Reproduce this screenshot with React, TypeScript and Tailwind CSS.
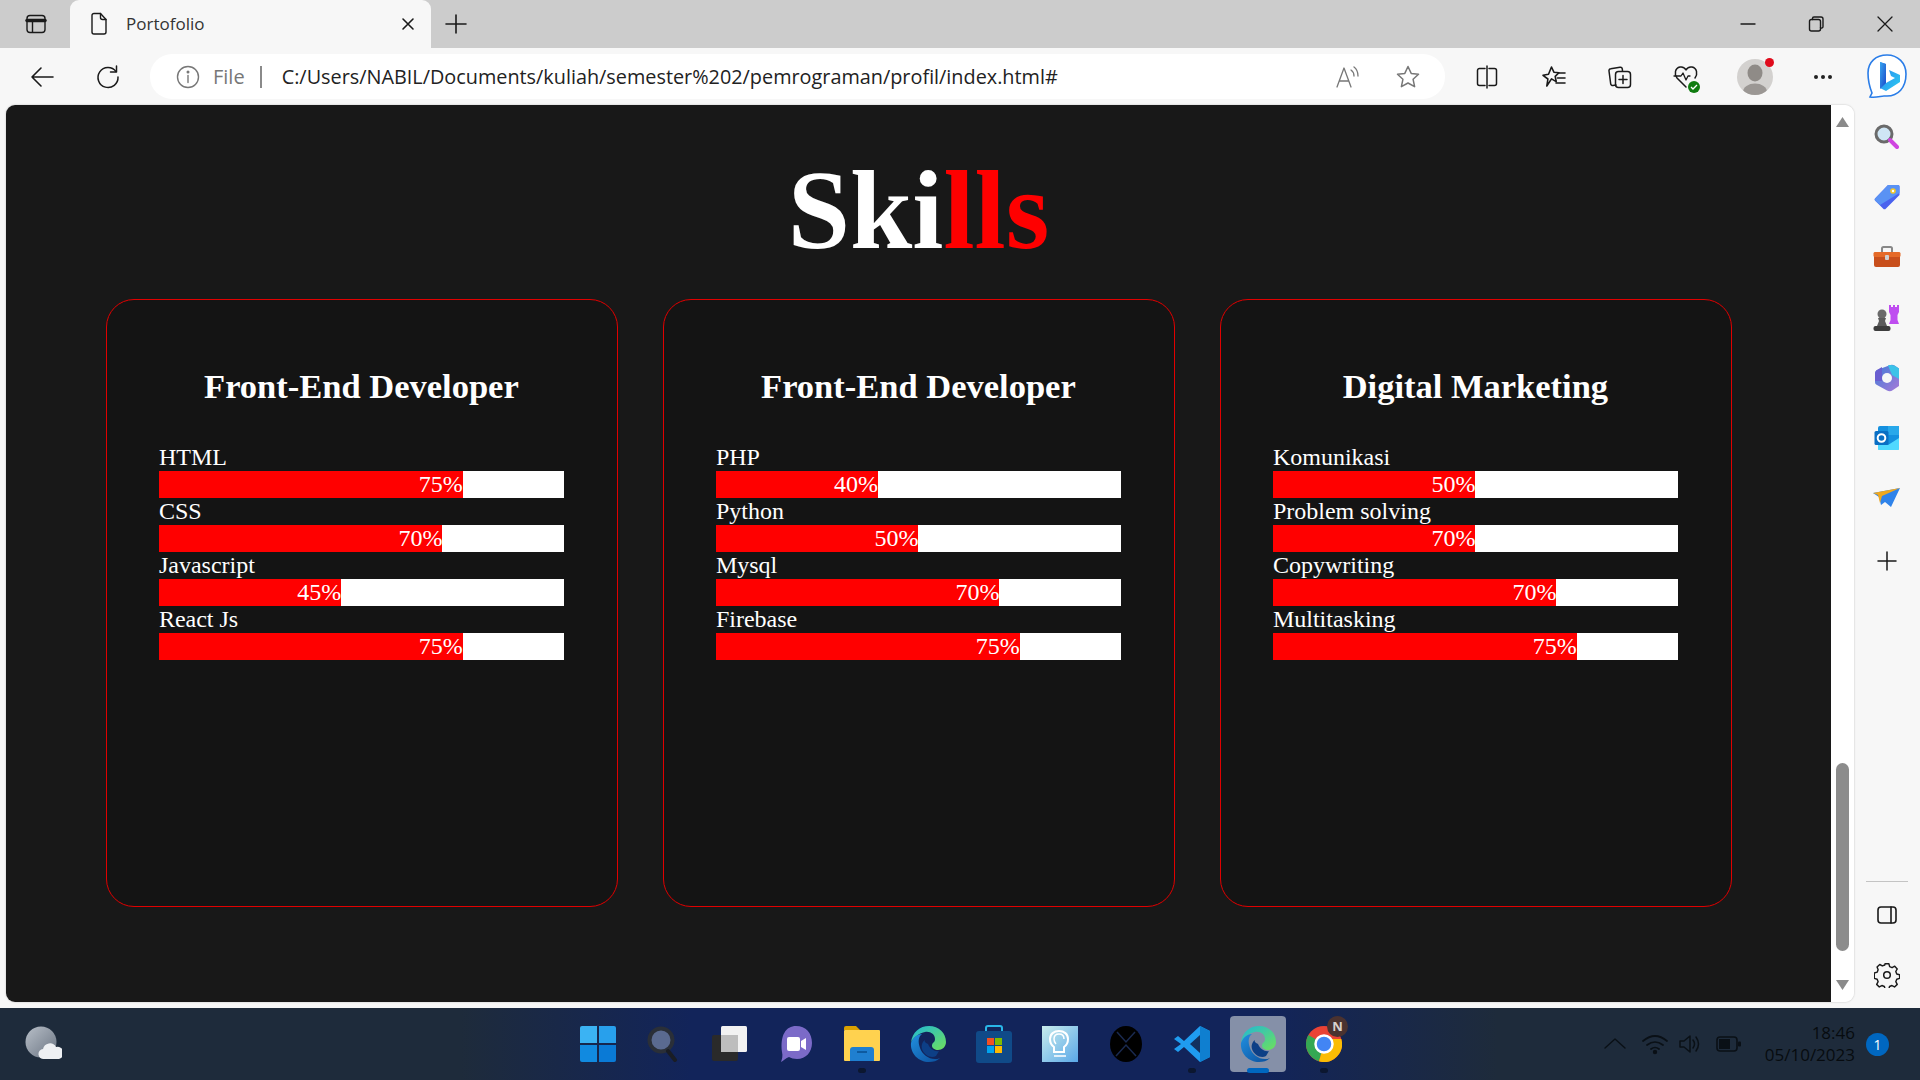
import React from "react";

type S = { children?: React.ReactNode; size?: number; w?: number; h?: number; vb?: string };
const I = ({ children, w = 24, h, vb }: S) => (
  <svg width={w} height={h ?? w} viewBox={vb ?? `0 0 ${w} ${h ?? w}`} fill="none" stroke="#1a1a1a" strokeWidth="1.4" strokeLinecap="round" strokeLinejoin="round" className="block shrink-0">{children}</svg>
);

const Slot = ({ w, children, className = "" }: { w: string; children?: React.ReactNode; className?: string }) => (
  <div className={`flex items-center justify-center shrink-0 ${w} ${className}`}>{children}</div>
);

const TabBar = () => (
  <div className="h-[48px] bg-[#cccccc] flex items-end shrink-0 relative">
    <Slot w="w-[70px]" className="h-[48px] pl-[2px]">
      <I w={22}><rect x="2" y="2.5" width="18" height="17" rx="3" /><path d="M2 7.500h18" strokeWidth="3.5" /><path d="M7.500 8v11" /></I>
    </Slot>
    <div className="w-[361px] h-[48px] bg-[#f7f7f7] rounded-t-[9px] flex items-center shrink-0">
      <div className="ml-[19px]">
        <I w={20} h={24}><path d="M3 3.500a2 2 0 0 1 2-2h6.500L17 7.500V20a2 2 0 0 1-2 2H5a2 2 0 0 1-2-2z" /><path d="M11.500 1.500v4a2 2 0 0 0 2 2H17" /></I>
      </div>
      <span className="ml-[17px] -mt-[1px] text-[17px] text-[#333] font-['Open_Sans',sans-serif] leading-none">Portofolio</span>
      <div className="ml-auto mr-[15px]"><I w={16}><path d="M3 3l10 10M13 3L3 13" strokeWidth="1.6" /></I></div>
    </div>
    <Slot w="w-[50px]" className="h-[48px]"><I w={24}><path d="M12 3v18M2 12h20" strokeWidth="1.6" /></I></Slot>
    <div className="ml-auto flex h-[48px] items-center">
      <Slot w="w-[68px]"><I w={18}><path d="M2 9h14" /></I></Slot>
      <Slot w="w-[68px]"><I w={18}><rect x="2.500" y="4.500" width="11" height="11.500" rx="2" /><path d="M5.500 4.500V3.500a1.500 1.500 0 0 1 1.500-1.500h7a2 2 0 0 1 2 2v7.500a1.500 1.500 0 0 1-2.500 1.200" /></I></Slot>
      <Slot w="w-[70px]"><I w={18}><path d="M2 2l14 14M16 2L2 16" strokeWidth="1.3" /></I></Slot>
    </div>
  </div>
);

const Bing = () => (
  <svg width="46" height="46" viewBox="0 0 44 46" className="block">
    <defs>
      <linearGradient id="bg1" x1="0" y1="0" x2="1" y2="1"><stop offset="0" stopColor="#37a5f0" /><stop offset="1" stopColor="#1a47c8" /></linearGradient>
      <linearGradient id="bg2" x1="0" y1="0" x2="1" y2="1"><stop offset="0" stopColor="#2a7ff0" /><stop offset="1" stopColor="#2ccdf0" /></linearGradient>
    </defs>
    <path d="M22 2C11 2 3 9 3 20c0 8 2 15 4 20l-2 4c6 1 11-1 14-1h3c11 0 19-8 19-22C41 10 33 2 22 2z" fill="#fff" stroke="#2a7de8" strokeWidth="1.6" />
    <path d="M15 9l6 2v19l9-5-4-2-2-6 11 5v7l-14 9-6-3z" fill="url(#bg2)" />
    <path d="M15 9l6 2v19l-6 6z" fill="url(#bg1)" />
  </svg>
);

const Toolbar = () => (
  <div className="h-[57px] bg-[#f7f7f7] flex items-start shrink-0 pt-[6px]">
    <Slot w="w-[50px]" className="ml-[17px] h-[45px]"><I w={26}><path d="M24 13H3M12 4l-9 9 9 9" strokeWidth="1.6" /></I></Slot>
    <Slot w="w-[50px]" className="ml-[16px] h-[45px]"><I w={26}><path d="M21 7.500A10 10 0 1 0 23 13" strokeWidth="1.5" /><path d="M21.500 2v6h-6" strokeWidth="1.5" /></I></Slot>
    <div className="ml-[17px] w-[1295px] h-[45px] bg-white rounded-[22px] flex items-center shrink-0">
      <div className="ml-[26px]">
        <I w={24}><circle cx="12" cy="12" r="10.500" stroke="#777" /><path d="M12 10.500v7" stroke="#777" /><circle cx="12" cy="7" r="0.8" fill="#777" stroke="#777" /></I>
      </div>
      <span className="ml-[13px] text-[20px] text-[#777] font-['Open_Sans',sans-serif] leading-none">File</span>
      <div className="ml-[15px] w-[2px] h-[22px] bg-[#8a8a8a]" />
      <span className="ml-[20px] text-[19.83px] text-[#222] font-['Open_Sans',sans-serif] leading-none whitespace-nowrap">C:/Users/NABIL/Documents/kuliah/semester%202/pemrograman/profil/index.html#</span>
      <div className="ml-auto mr-[24px] flex items-center gap-[34px]">
        <I w={26}><path d="M2 23L9 4l7 19M4.500 17h9" stroke="#777" strokeWidth="1.3" /><path d="M16 6q3 2 3 6M19 3q4 3 4 9" stroke="#777" strokeWidth="1.3" /></I>
        <I w={26}><path d="M13 2.500l3.200 6.900 7.300.9-5.400 5 1.500 7.400-6.600-3.700-6.600 3.700 1.500-7.400-5.400-5 7.300-.9z" stroke="#777" strokeWidth="1.5" /></I>
      </div>
    </div>
    <Slot w="w-[66px]" className="ml-[9px] h-[45px]"><I w={24}><path d="M10 3.500H4.500a2 2 0 0 0-2 2v13a2 2 0 0 0 2 2H10M14 3.500h5.500a2 2 0 0 1 2 2v13a2 2 0 0 1-2 2H14M12 1v22" strokeWidth="1.5" /></I></Slot>
    <Slot w="w-[66px]" className="ml-[1px] h-[45px]"><I w={26}><path d="M10.500 3l2.400 5.200 5 .6-3.700 3.600 1 5.200-4.700-2.700L5.800 22l1.100-7L2 11.300l5.500-1z" strokeWidth="1.6" /><path d="M17 9h7M16.500 14h7.500M15 19h9" strokeWidth="1.6" /></I></Slot>
    <Slot w="w-[66px]" className="h-[45px]"><I w={26}><path d="M9 21l-3 .5a2 2 0 0 1-2.300-1.700L2 7a2 2 0 0 1 1.700-2.300L13 3.200a2 2 0 0 1 2.300 1.600L15.500 7" strokeWidth="1.5" /><rect x="8.500" y="7.500" width="15" height="16" rx="3" strokeWidth="1.5" /><path d="M16 11.500v8M12 15.500h8" strokeWidth="1.5" /></I></Slot>
    <Slot w="w-[66px]" className="h-[45px]">
      <div className="relative w-[26px] h-[26px]">
        <I w={26}><path d="M13 23L4 14C1 10 2 4 7 3c3-.5 5 1 6 3 1-2 3-3.500 6-3 5 1 6 7 3 11" strokeWidth="1.5" /><path d="M1 12h7l2-3 3 7 2-4h2" strokeWidth="1.3" /></I>
        <div className="absolute right-[-1px] bottom-[-3px] w-[12px] h-[12px] rounded-full bg-[#107c10] flex items-center justify-center">
          <svg width="8" height="8" viewBox="0 0 8 8" fill="none" stroke="#fff" strokeWidth="1.3"><path d="M1 4l2 2 4-4" /></svg>
        </div>
      </div>
    </Slot>
    <Slot w="w-[68px]" className="ml-[2px] h-[45px]">
      <div className="relative w-[36px] h-[36px] rounded-full bg-[#d3d1cf]">
        <div className="w-[36px] h-[36px] rounded-full overflow-hidden">
          <svg width="36" height="36" viewBox="0 0 36 36"><ellipse cx="18" cy="14" rx="7.500" ry="8.500" fill="#8f8b87" /><ellipse cx="18" cy="33" rx="12" ry="8.500" fill="#9b9794" /></svg>
        </div>
        <div className="absolute right-[-1px] top-[-1px] w-[9px] h-[9px] rounded-full bg-[#e00b1c]" />
      </div>
    </Slot>
    <Slot w="w-[68px]" className="h-[45px]"><div className="flex gap-[3px]"><div className="w-[4px] h-[4px] rounded-full bg-[#222]" /><div className="w-[4px] h-[4px] rounded-full bg-[#222]" /><div className="w-[4px] h-[4px] rounded-full bg-[#222]" /></div></Slot>
    <Slot w="w-[60px]" className="h-[48px] -mt-[2px]"><Bing /></Slot>
  </div>
);

const bars = [
  { title: "Front-End Developer", items: [["HTML", 75, 75], ["CSS", 70, 70], ["Javascript", 45, 45], ["React Js", 75, 75]] },
  { title: "Front-End Developer", items: [["PHP", 40, 40], ["Python", 50, 50], ["Mysql", 70, 70], ["Firebase", 75, 75]] },
  { title: "Digital Marketing", items: [["Komunikasi", 50, 50], ["Problem solving", 50, 70], ["Copywriting", 70, 70], ["Multitasking", 75, 75]] },
] as { title: string; items: [string, number, number][] }[];

const Card = ({ title, items }: { title: string; items: [string, number, number][] }) => (
  <div className="w-[512px] h-[608px] border border-[#e00000] rounded-[28px] bg-[#141414] pl-[52.4px] pr-[52.6px] pt-[66px] shrink-0">
    <h2 className="text-[34.5px] leading-[40px] font-bold text-center text-white mb-[38px]">{title}</h2>
    {items.map(([n, w, p]) => (
      <div key={n}>
        <div className="text-[24px] leading-[27px] text-white">{n}</div>
        <div className="h-[27px] bg-white">
          <div className="h-[27px] bg-[#ff0000] text-right text-white text-[24px] leading-[27px]" style={{ width: `${w}%` }}>{p}%</div>
        </div>
      </div>
    ))}
  </div>
);

const Page = () => (
  <div className="ml-[6px] w-[1848px] h-[897px] rounded-[9px] overflow-hidden flex shrink-0 shadow-[0_0_2px_rgba(0,0,0,0.25)]">
    <div className="w-[1825px] bg-[#181818] font-['Liberation_Serif',serif]">
      <h1 className="text-center font-bold text-[112px] leading-[128px] text-white mt-[41px]">Ski<span className="text-[#ff0000]">lls</span></h1>
      <div className="flex justify-center gap-[45px] mt-[25px]">
        {bars.map((b, i) => <Card key={i} title={b.title} items={b.items} />)}
      </div>
    </div>
    <div className="w-[23px] bg-white flex flex-col items-center pt-[12px]">
      <svg width="13" height="10" viewBox="0 0 13 10" className="mr-[1px]"><path d="M6.500 0L13 10H0z" fill="#8a8a8a" /></svg>
      <div className="mt-[636px] w-[13px] h-[188px] rounded-full bg-[#8c8c8c] mr-[1px]" />
      <svg width="13" height="10" viewBox="0 0 13 10" className="mt-[29px] mr-[1px]"><path d="M6.500 10L13 0H0z" fill="#8a8a8a" /></svg>
    </div>
  </div>
);

const SideIcon = ({ children }: { children: React.ReactNode }) => (
  <div className="h-[60.2px] flex items-center justify-center">{children}</div>
);

const Sidebar = () => (
  <div className="w-[66px] h-[897px] flex flex-col items-center pt-[2px] shrink-0">
    <SideIcon>
      <svg width="26" height="26" viewBox="0 0 26 26" className="mr-[3px]"><circle cx="11" cy="10" r="8" fill="#cfe6f5" stroke="#6a6a6a" strokeWidth="3" /><path d="M17 16l7 7" stroke="#cf45e0" strokeWidth="4" strokeLinecap="round" /></svg>
    </SideIcon>
    <SideIcon>
      <svg width="26" height="26" viewBox="0 0 26 26"><path d="M14 1h10a1.500 1.500 0 0 1 1.500 1.500V11L12 24.500a2 2 0 0 1-3 0L1.500 17a2 2 0 0 1 0-3z" fill="#4a62ee" /><path d="M14 1h10a1.500 1.500 0 0 1 1.500 1.500V9L6 21 1.500 17a2 2 0 0 1 0-3z" fill="#5a92f4" /><circle cx="19" cy="7" r="2.800" fill="#f3c62a" /><circle cx="19" cy="7" r="1.200" fill="#fff" /></svg>
    </SideIcon>
    <SideIcon>
      <svg width="28" height="24" viewBox="0 0 28 24"><path d="M9 7V3.500A1.500 1.500 0 0 1 10.500 2h7A1.500 1.500 0 0 1 19 3.500V7" stroke="#888" strokeWidth="2" fill="none" /><rect x="1" y="7" width="26" height="15" rx="2" fill="#c84f1c" /><rect x="0.500" y="7" width="27" height="5" rx="1.500" fill="#e56a28" /><rect x="12" y="10" width="4" height="5" rx="1" fill="#cfcfcf" /></svg>
    </SideIcon>
    <SideIcon>
      <svg width="28" height="28" viewBox="0 0 28 28"><path d="M16 1h2v2h2V1h2v2h2V1h2v7l-1.500 3v5l1.500 4H16l1.500-4v-5L16 8z" fill="#bf4df0" /><circle cx="9" cy="10" r="4.500" fill="#6a6a6a" /><path d="M5 14h8l-1 3 2 5H4l2-5z" fill="#5c5c5c" /><rect x="0.500" y="22" width="17" height="5" rx="2" fill="#3d3d3d" /></svg>
    </SideIcon>
    <SideIcon>
      <svg width="26" height="28" viewBox="0 0 26 28"><defs><linearGradient id="m1" x1="0" y1="0" x2="1" y2="1"><stop offset="0" stopColor="#3f7cd8" /><stop offset="1" stopColor="#a77ad8" /></linearGradient></defs><path d="M15 1.500c2-1 4-1 5.500 0L25 4.500V22l-6 4c-2 1.500-4 1.500-6 .5L3 21c-2-1-2-2-2-4V10c0-2 .5-3 2-4z" fill="url(#m1)" /><path d="M14 1.500c2-1 5 0 6.500 0L25 4.500V15l-7-4z" fill="#3cc2e8" /><path d="M1 17V10c0-2 .5-3 2-4l5-3v14z" fill="#6a5ed0" /><circle cx="13" cy="14" r="5" fill="#f7f7f7" /></svg>
    </SideIcon>
    <SideIcon>
      <svg width="26" height="26" viewBox="0 0 26 26"><rect x="4" y="1" width="21" height="24" rx="2" fill="#1490df" /><path d="M14 1h11v9H14z" fill="#28a8ea" /><path d="M4 13l10 7 11-7v11a1 1 0 0 1-1 1H5a1 1 0 0 1-1-1z" fill="#50d9ff" /><rect x="0.500" y="6" width="14" height="14" rx="1.500" fill="#0a6fc4" /><circle cx="7.500" cy="13" r="3.800" fill="none" stroke="#fff" strokeWidth="2" /></svg>
    </SideIcon>
    <SideIcon>
      <svg width="28" height="24" viewBox="0 0 28 24"><path d="M0 7l27-5-9 19-6-5-4 3-2-8z" fill="#2f83ea" /><path d="M0 7l27-5-18 8-2 7-2-8z" fill="#f0a81e" /></svg>
    </SideIcon>
    <div className="h-[60.2px] mt-[3px] flex items-center justify-center">
      <I w={20}><path d="M10 1v18M1 10h18" strokeWidth="1.5" /></I>
    </div>
    <div className="mt-[289px] w-[42px] h-px bg-[#c4c4c4]" />
    <div className="mt-[11px] h-[44px] flex items-center justify-center">
      <I w={22}><rect x="2" y="3" width="18" height="16" rx="3" strokeWidth="1.6" /><path d="M15 3v16" strokeWidth="1.6" /></I>
    </div>
    <div className="mt-[16px] h-[44px] flex items-center justify-center">
      <I w={26}><path d="M11 1.800h4l.8 3 2.500 1.100 2.800-1.500 2.600 2.800-1.500 2.700 1 2.600 3 .8v3.800l-3 .9-1 2.500 1.500 2.800-2.800 2.700-2.700-1.500-2.500 1-.8 3h-3.800l-.8-3-2.600-1-2.700 1.500-2.700-2.700 1.500-2.800-1-2.500-3-.9V11.500l3-.9 1-2.500L2.700 5.300l2.800-2.700 2.700 1.500 2.500-1z" strokeWidth="1.500" transform="scale(0.96) translate(0.500 0)" /><circle cx="13" cy="13" r="3.300" strokeWidth="1.500" /></I>
    </div>
  </div>
);

const TaskIcon = ({ children, active, dot }: { children: React.ReactNode; active?: boolean; dot?: boolean }) => (
  <div className="w-[66px] h-[56px] flex items-center justify-center relative">
    {active && <div className="absolute left-[5px] top-0 w-[56px] h-[56px] rounded-[4px] bg-[#8590a8]" />}
    <div className="relative">{children}</div>
    {dot && <div className="absolute bottom-[-1px] left-[29px] w-[8px] h-[5px] rounded-full bg-[#0c1730]" />}
    {active && <div className="absolute bottom-[-1px] left-[22px] w-[22px] h-[5px] rounded-full bg-[#0067c0]" />}
  </div>
);

const Edge = ({ id }: { id: string }) => (
  <svg width="36" height="36" viewBox="0 0 36 36">
    <defs>
      <linearGradient id={`${id}a`} x1="0" y1="0" x2="1" y2="1"><stop offset="0" stopColor="#1fb8d8" /><stop offset="1" stopColor="#6ee05c" /></linearGradient>
      <linearGradient id={`${id}b`} x1="0" y1="0" x2="1" y2="1"><stop offset="0" stopColor="#2190e0" /><stop offset="1" stopColor="#0c4f9c" /></linearGradient>
    </defs>
    <path d="M1 17C2 6 10 0 19 0c10 0 17 7 17 16 0 5-4 8-8 8-3 0-6-2-6-4 0-4 3-3 3-7 0-5-5-8-10-7S3 11 1 17z" fill={`url(#${id}a)`} />
    <path d="M1 17c2-6 7-9 11-9-4 3-4 8-2 14 2 6 8 11 15 11 2 0 3 0 5-1-3 3-7 4-11 4C9 36 0 28 1 17z" fill={`url(#${id}b)`} />
    <path d="M18 18c2 5 7 8 11 7l-3 5c-5 3-12-1-14-7-1-3 0-7 3-9-1 1 0 3 3 4z" fill="#0d3f86" />
  </svg>
);

const Taskbar = () => (
  <div className="h-[72px] mt-[6px] w-[1920px] bg-[linear-gradient(90deg,#1e2b3b_0%,#1e2b3b_24%,#12245a_36%,#12245a_66%,#1e2b3b_78%,#1e2b3b_100%)] flex items-center relative shrink-0">
    <div className="absolute left-[24px] top-[18px]">
      <svg width="38" height="36" viewBox="0 0 38 36"><defs><linearGradient id="wx" x1="0" y1="0" x2="1" y2="1"><stop offset="0" stopColor="#b8bfc8" /><stop offset="1" stopColor="#6a7482" /></linearGradient></defs><circle cx="17" cy="16" r="15.500" fill="url(#wx)" /><path d="M20 33a5 5 0 0 1-1-10 7 7 0 0 1 13-2 6 6 0 0 1 3 12z" fill="#eef0f3" /></svg>
    </div>
    <div className="flex ml-[565px]">
      <TaskIcon>
        <div className="grid grid-cols-2 gap-[2px] w-[36px] h-[36px]">
          <div className="bg-[#3bb3f3] rounded-tl-[2px]" /><div className="bg-[#28a0ec] rounded-tr-[2px]" /><div className="bg-[#118ae0] rounded-bl-[2px]" /><div className="bg-[#0a7ad6] rounded-br-[2px]" />
        </div>
      </TaskIcon>
      <TaskIcon>
        <svg width="34" height="36" viewBox="0 0 34 36"><circle cx="14" cy="14" r="11.500" fill="#5a6a90" stroke="#2a2f38" strokeWidth="4" /><path d="M21 25l7 9" stroke="#1a1d24" strokeWidth="4" strokeLinecap="round" /></svg>
      </TaskIcon>
      <TaskIcon>
        <svg width="36" height="36" viewBox="0 0 36 36"><rect x="0" y="9" width="26" height="26" rx="2" fill="#2a2a2a" /><rect x="9" y="0" width="26" height="26" rx="1.500" fill="#f2f2f2" /><rect x="9" y="9" width="17" height="17" fill="#bdbdbd" /></svg>
      </TaskIcon>
      <TaskIcon>
        <svg width="34" height="38" viewBox="0 0 34 38"><path d="M17 1c10 0 16 7 16 17 0 9-6 16-15 16-3 0-6-1-8-2-3 1-6 4-8 5 1-3 2-6 1-10C1 10 7 1 17 1z" fill="#7b6ac8" /><rect x="8" y="12" width="13" height="14" rx="2" fill="#fff" /><path d="M22 16l5-3v12l-5-3z" fill="#fff" /></svg>
      </TaskIcon>
      <TaskIcon dot>
        <svg width="36" height="36" viewBox="0 0 36 36"><path d="M0 2a2 2 0 0 1 2-2h10l4 4H0z" fill="#d9a000" /><rect x="0" y="4" width="36" height="31" rx="1" fill="#ffd24f" /><path d="M6 35V24a3 3 0 0 1 3-3h18a3 3 0 0 1 3 3v11z" fill="#1f7fd0" /><rect x="13" y="25" width="10" height="2" fill="#0d5aa0" /></svg>
      </TaskIcon>
      <TaskIcon><Edge id="e1" /></TaskIcon>
      <TaskIcon>
        <svg width="36" height="38" viewBox="0 0 36 38"><path d="M10 7V3a2 2 0 0 1 2-2h12a2 2 0 0 1 2 2v4" stroke="#29b6e8" strokeWidth="2" fill="none" /><rect x="0" y="6" width="36" height="32" rx="3" fill="#104a88" /><rect x="11" y="13" width="7" height="7" fill="#f25022" /><rect x="19" y="13" width="7" height="7" fill="#7fba00" /><rect x="11" y="21" width="7" height="7" fill="#00a4ef" /><rect x="19" y="21" width="7" height="7" fill="#ffb900" /></svg>
      </TaskIcon>
      <TaskIcon>
        <svg width="36" height="36" viewBox="0 0 36 36"><defs><linearGradient id="bl" x1="0" y1="0" x2="1" y2="1"><stop offset="0" stopColor="#c8ecec" /><stop offset="1" stopColor="#5aa8e8" /></linearGradient></defs><rect width="36" height="36" fill="url(#bl)" /><path d="M12 26v-5c-3-2-4-5-4-8 0-5 4-8 9-8s9 3 9 8c0 3-1 6-4 8v5z" fill="none" stroke="#fff" strokeWidth="2" /><path d="M14 18c-1-1-2-3-2-5 0-3 2-5 5-5s5 2 5 5M12 30h12" fill="none" stroke="#fff" strokeWidth="1.500" /></svg>
      </TaskIcon>
      <TaskIcon>
        <svg width="32" height="36" viewBox="0 0 32 36"><ellipse cx="16" cy="18" rx="16" ry="18" fill="#000" /><path d="M7 6l9 10 9-10M6 30l10-11 10 11" fill="none" stroke="#1a2a50" strokeWidth="1.500" /></svg>
      </TaskIcon>
      <TaskIcon dot>
        <svg width="36" height="36" viewBox="0 0 36 36"><path d="M26 0l10 5v26l-10 5L10 21l-6 5-4-3 7-5-7-5 4-3 6 5z" fill="#1f9cf0" /><path d="M26 9l-10 9 10 9z" fill="#12315e" /><path d="M26 0l10 5v26l-10 5z" fill="#0f7fd0" /></svg>
      </TaskIcon>
      <TaskIcon active><Edge id="e2" /></TaskIcon>
      <TaskIcon dot>
        <div className="relative">
          <svg width="36" height="36" viewBox="0 0 36 36"><circle cx="18" cy="18" r="18" fill="#e94235" /><path d="M18 18L2.400 9A18 18 0 0 0 13 35.300z" fill="#34a853" /><path d="M18 18l-5 17.300A18 18 0 0 0 35.300 13H18z" fill="#fbbc04" /><circle cx="18" cy="18" r="8.500" fill="#4285f4" stroke="#fff" strokeWidth="2.500" /></svg>
          <div className="absolute right-[-6px] top-[-10px] w-[21px] h-[21px] rounded-full bg-[#4a3230] text-[#d8d0cc] text-[13px] font-bold flex items-center justify-center font-['Open_Sans',sans-serif]">N</div>
        </div>
      </TaskIcon>
    </div>
    <div className="absolute left-[1600px] top-0 h-[72px] w-[320px] flex items-center">
      <div className="ml-[3px]"><I w={24}><path d="M2 16l10-9 10 9" stroke="#0a1016" strokeWidth="1.400" /></I></div>
      <div className="ml-[15px]">
        <I w={26}><g stroke="#0a1016" strokeWidth="1.700"><path d="M1 10q12-10 24 0M5 14q8-6 16 0M9 18q4-3 8 0" /></g><circle cx="13" cy="21" r="1.500" fill="#0a1016" stroke="#0a1016" /></I>
      </div>
      <div className="ml-[10px]">
        <I w={24}><g stroke="#0a1016" strokeWidth="1.500"><path d="M2 9v6h4l6 5V4L6 9z" /><path d="M15 8q3 4 0 8M18 5q5 7 0 14" /></g></I>
      </div>
      <div className="ml-[14px]">
        <svg width="26" height="16" viewBox="0 0 26 16"><rect x="1" y="1" width="20" height="14" rx="3" fill="none" stroke="#0a1016" strokeWidth="1.600" /><rect x="3" y="3" width="11" height="10" fill="#0a1016" /><rect x="22" y="5.500" width="3" height="5" rx="1" fill="#0a1016" /></svg>
      </div>
      <div className="ml-auto mr-[65px] text-right font-['Open_Sans',sans-serif] text-[#070b0f] text-[17px] leading-[22px]">
        <div>18:46</div>
        <div>05/10/2023</div>
      </div>
    </div>
    <div className="absolute left-[1866px] top-[25px] w-[23px] h-[23px] rounded-full bg-[#0067c0] text-white text-[14px] flex items-center justify-center font-['Open_Sans',sans-serif]">1</div>
  </div>
);

export default function App() {
  return (
    <div className="w-[1920px] h-[1080px] overflow-hidden bg-[#f7f7f7] flex flex-col">
      <TabBar />
      <Toolbar />
      <div className="flex shrink-0">
        <Page />
        <Sidebar />
      </div>
      <Taskbar />
    </div>
  );
}
